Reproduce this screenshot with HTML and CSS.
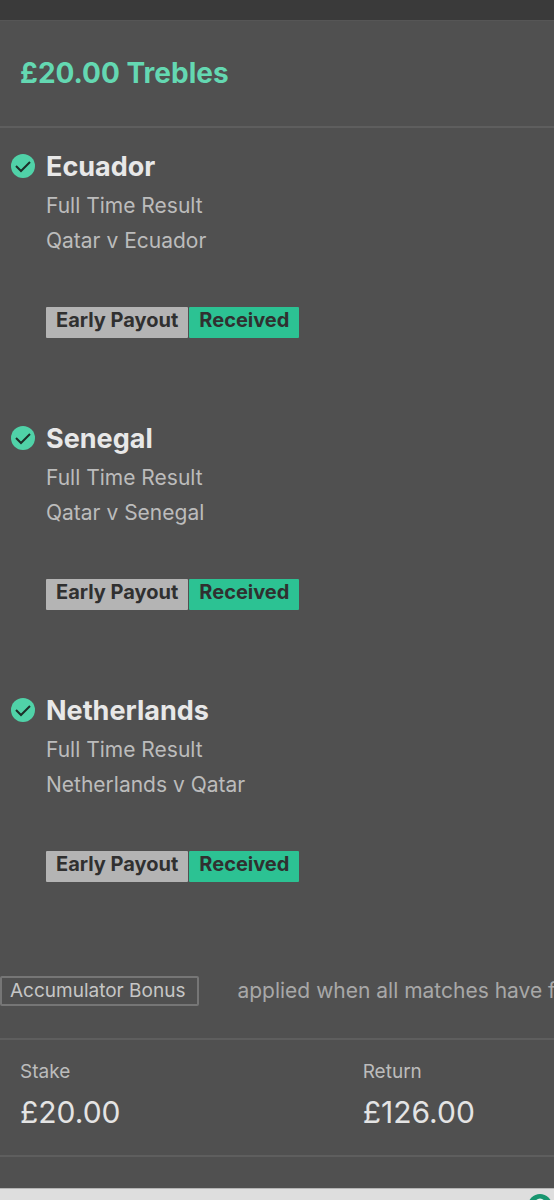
FILE: index.html
```html
<!DOCTYPE html>
<html lang="en">
<head>
<meta charset="utf-8">
<meta name="viewport" content="width=device-width, initial-scale=1">
<title>£20.00 Trebles</title>
<link rel="stylesheet" href="styles.css">
</head>
<body>
<div class="topbar"></div>
<main class="slip">
  <header class="slip-header"><h1 class="slip-title">£20.00 Trebles</h1></header>
  <section class="selection">
    <svg class="tick" viewBox="0 0 24 24" aria-hidden="true"><circle cx="12" cy="12" r="12"/><path d="M5 12l5 5 9-9"/></svg>
    <div class="selection-body">
      <h2 class="selection-name">Ecuador</h2>
      <p class="meta">Full Time Result</p>
      <p class="meta">Qatar v Ecuador</p>
      <div class="badges"><span class="badge">Early Payout</span><span class="badge badge-received">Received</span></div>
    </div>
  </section>
  <section class="selection">
    <svg class="tick" viewBox="0 0 24 24" aria-hidden="true"><circle cx="12" cy="12" r="12"/><path d="M5 12l5 5 9-9"/></svg>
    <div class="selection-body">
      <h2 class="selection-name">Senegal</h2>
      <p class="meta">Full Time Result</p>
      <p class="meta">Qatar v Senegal</p>
      <div class="badges"><span class="badge">Early Payout</span><span class="badge badge-received">Received</span></div>
    </div>
  </section>
  <section class="selection">
    <svg class="tick" viewBox="0 0 24 24" aria-hidden="true"><circle cx="12" cy="12" r="12"/><path d="M5 12l5 5 9-9"/></svg>
    <div class="selection-body">
      <h2 class="selection-name">Netherlands</h2>
      <p class="meta">Full Time Result</p>
      <p class="meta">Netherlands v Qatar</p>
      <div class="badges"><span class="badge">Early Payout</span><span class="badge badge-received">Received</span></div>
    </div>
  </section>
  <div class="bonus">
    <span class="bonus-tag">Accumulator Bonus</span>
    <span class="bonus-text">applied when all matches have f</span>
  </div>
  <dl class="totals">
    <div class="total"><dt class="total-label">Stake</dt><dd class="total-value">£20.00</dd></div>
    <div class="total"><dt class="total-label">Return</dt><dd class="total-value">£126.00</dd></div>
  </dl>
</main>
<footer class="dock">
  <svg class="dock-icon" viewBox="0 0 24 24" aria-hidden="true"><circle cx="12" cy="12" r="12"/><circle class="dock-dot" cx="12" cy="10" r="4"/></svg>
</footer>
</body>
</html>
```
FILE: styles.css
```css
* { box-sizing: border-box; }
html { background: #dedede; }
body {
  margin: 0;
  height: 100vh;
  display: flex;
  flex-direction: column;
  overflow: hidden;
  background: #505050;
  color: #bcbcbc;
  font-family: Inter, "Liberation Sans", sans-serif;
}
h1, h2, p, dl, dd { margin: 0; }
.topbar { flex: none; height: 20px; background: #3a3a3a; }
.slip { flex: none; padding-bottom: 31px; border-top: 1px solid #565656; }
.slip-header { padding: 32px 20px 33px; border-bottom: 2px solid #5e5e5e; }
.slip-title { font-size: 28px; line-height: 40px; font-weight: 700; color: #64d8b2; }
.selection { display: flex; gap: 11px; padding: 21px 11px 62px; }
.tick { flex: none; width: 24px; height: 24px; margin-top: 5px; fill: #50d2a8; }
.tick path { fill: none; stroke: #1c2f29; stroke-width: 2; }
.selection-name { margin-bottom: 3px; font-size: 27px; line-height: 36px; font-weight: 700; color: #e8e8e8; }
.meta { font-size: 21px; line-height: 35px; }
.badges { display: flex; gap: 1px; margin-top: 49px; }
.badge {
  height: 31px;
  padding: 0 10px;
  border-radius: 1px;
  background: #b4b4b4;
  color: #303030;
  font-size: 20px;
  line-height: 26px;
  font-weight: 700;
}
.badge-received { background: #2cc293; }
.bonus {
  display: flex;
  align-items: center;
  gap: 38px;
  padding: 32px 0;
  overflow: hidden;
  white-space: nowrap;
  border-bottom: 2px solid #5e5e5e;
}
.bonus-tag {
  flex: none;
  padding: 0 12px 0 8px;
  border: 2px solid #767676;
  border-radius: 2px;
  font-size: 19px;
  line-height: 26px;
  color: #c6c6c6;
}
.bonus-text { font-size: 21px; line-height: 26px; color: #a8a8a8; }
.totals {
  display: grid;
  grid-template-columns: 2fr 1fr;
  padding: 19px 20px 23px;
  border-bottom: 2px solid #5e5e5e;
}
.total-label { font-size: 19px; line-height: 26px; }
.total-value { margin-top: 7px; font-size: 30px; line-height: 40px; color: #e4e4e4; }
.dock {
  flex: 1;
  display: flex;
  justify-content: flex-end;
  padding: 5px 2px 0;
  background: #dedede;
  border-top: 1px solid #b4b4b4;
}
.dock-icon { flex: none; width: 24px; height: 24px; fill: #17966f; }
.dock-dot { fill: none; stroke: #e6f2ee; stroke-width: 3; }
```
